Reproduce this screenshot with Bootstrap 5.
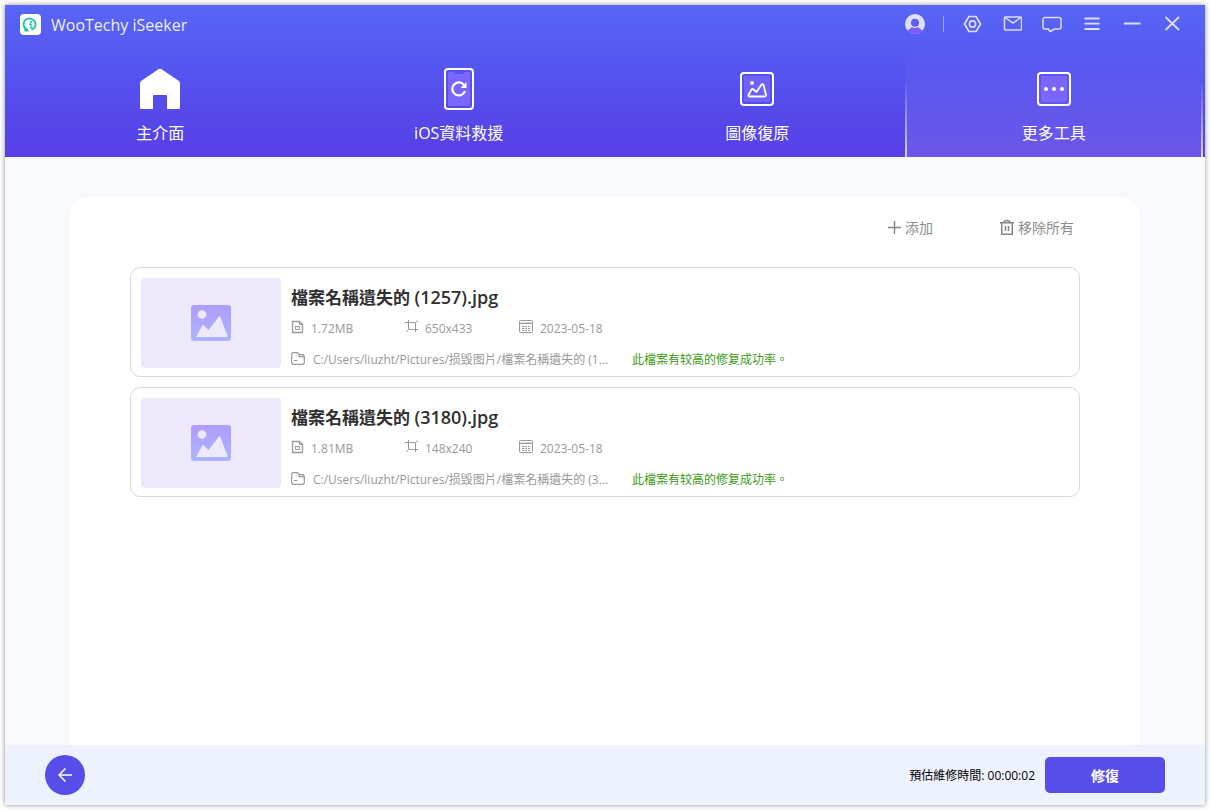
<!DOCTYPE html>
<html lang="zh-Hant">
<head>
<meta charset="utf-8">
<meta name="viewport" content="width=device-width, initial-scale=1">
<title>WooTechy iSeeker</title>
<link href="https://cdn.jsdelivr.net/npm/bootstrap@5.3.0/dist/css/bootstrap.min.css" rel="stylesheet">
<style>
body{font-family:"Open Sans","Noto Sans CJK TC",sans-serif;font-size:12px;line-height:20px;background:#fff;color:#333}
.shell{padding:5px}
.app-window{min-height:calc(100vh - 10px);background:#f7f9fd;box-shadow:0 0 5px rgba(0,0,0,.45)}
.app-head{background:linear-gradient(#5866f6,#5553ef 45%,#573fe6);color:#fff}
.title-bar{height:38px;padding:0 23px 0 15px}
.brand-name{font-size:16px;line-height:24px;margin-left:10px;padding-top:2px;color:#eceeff}
.tool-btn{width:20px;height:20px;padding:0;border:0;background:none;color:#dcdeff;display:flex}
.tool-split{width:1px;height:16px;background:#a3a8fa;margin:0 18px}
.tool-group{gap:20px}
.tab-row{padding:0 2px 0 6px}
.tab-item{height:114px;padding-top:24px;color:#fff;text-decoration:none;font-size:16px;line-height:24px;border:solid transparent;border-width:0 2px}
.tab-item svg{display:block;margin-bottom:11px}
.tab-item:hover{color:#fff}
.tab-item.active{margin-left:-2px;background:linear-gradient(rgba(255,255,255,0),rgba(255,255,255,.12));border-image:linear-gradient(rgba(255,255,255,0) 34%,rgba(255,255,255,.75)) 1}
.body-area{padding:40px 65px 0}
.panel{background:#fff;border-radius:20px 20px 0 0;padding:20px 60px}
.panel-tools{gap:66px;padding:0 6px;margin-bottom:28px}
.text-btn{border:0;background:none;padding:0;color:#8d8d8d;font-size:14px;line-height:22px;display:flex;align-items:center;gap:3px}
.file-list{gap:10px}
.file-card{border:1px solid #dadada;border-radius:10px;height:110px;padding:10px 10px 8px;gap:10px;background:#fff}
.thumb{width:140px;border-radius:4px;background:#ede9fb}
.file-name{font-size:17px;line-height:24px;font-weight:600;margin:8px 0 9px;color:#303030}
.file-ext{font-size:18px;line-height:20px}
.file-meta{color:#999;line-height:20px}
.file-meta svg{flex:none;margin-bottom:5px}
.meta-cell{gap:7px;width:114px}
.path-cell{gap:8px;width:341px}
.path-cell svg{margin:0 0 2px}
.file-meta+.file-meta{margin-top:10px}
.ok-text{color:#3b9c13;padding-top:1px}
.foot-bar{height:60px;background:#eef2fe;padding:0 40px}
.back-btn{width:40px;height:40px;border:0;border-radius:50%;background:#574eea;padding:0}
.eta{color:#000;margin-right:10px;padding-top:2px}
.go-btn{width:120px;height:36px;border:0;border-radius:5px;background:#574eea;color:#fff;font-size:14px;font-weight:700;padding:2px 0 0}
</style>
</head>
<body>
<svg class="position-absolute" width="0" height="0" aria-hidden="true">
<defs>
<linearGradient id="pic" x1="0" y1="0" x2="0" y2="1"><stop stop-color="#b09cfe"/><stop offset="1" stop-color="#aab4ff"/></linearGradient>
</defs>
<symbol id="i-doc" viewBox="0 0 13 14"><g fill="none" stroke="#999"><path d="M1.500 1.500h7l3 3v8h-10z" stroke-width="1.300" stroke-linejoin="round"/><path d="M8.500 1.500v3h3"/><path d="M4.500 6.500h4v3h-4z"/></g></symbol>
<symbol id="i-crop" viewBox="0 0 13 13"><path d="M3.500 0v9.500H13M0 2.500h10.500V12M10.500 2.500L13 .500M3.500 9.500L1 12" fill="none" stroke="#999"/></symbol>
<symbol id="i-cal" viewBox="0 0 14 13"><g fill="none" stroke="#999"><rect x=".5" y=".5" width="13" height="12" rx="1"/><path d="M1 2.500h12" stroke="#ddd"/><path d="M1 3.500h12"/><path d="M3 6.500h8M3 8.500h8M3 10.500h8" stroke-dasharray="2 1"/></g></symbol>
<symbol id="i-folder" viewBox="0 0 14 13"><path d="M2.500.7h4l1.500 2h3.500a1.800 1.800 0 0 1 1.800 1.800v6a1.800 1.800 0 0 1-1.800 1.800h-9a1.800 1.800 0 0 1-1.800-1.800v-8A1.800 1.800 0 0 1 2.500.7zM8 2.700v2h5M3 8.500h3.500" fill="none" stroke="#999" stroke-width="1.200"/></symbol>
<symbol id="i-pic" viewBox="0 0 40 36"><rect width="40" height="36" rx="3" fill="url(#pic)"/><circle cx="11" cy="9.500" r="4.300" fill="#ede9fb"/><path d="M5 32L11.500 20q.5-.7 1 0L17.500 25 28 11.500q.7-.8 1.200 0L36.500 31q.2 1-.8 1z" fill="#ede9fb"/></symbol>
</svg>
<div class="shell">
<div class="app-window d-flex flex-column">
  <header class="app-head">
    <div class="title-bar d-flex align-items-center">
      <svg width="21" height="21" viewBox="0 0 21 21"><rect width="21" height="21" rx="4" fill="#fff"/><path d="M6 15a6 5.800 0 1 1 5.500.8" fill="none" stroke="#22c9a4" stroke-width="1.900"/><path d="M4.500 12v5.500H9L7.500 15z" fill="#16bba8"/><circle cx="11" cy="7.800" r="1.100" fill="#22c9a4"/><path d="M9 10.300h2V14h1.500" fill="none" stroke="#22c9a4" stroke-width="1.400"/></svg>
      <span class="brand-name">WooTechy iSeeker</span>
      <div class="ms-auto d-flex align-items-center">
        <button class="tool-btn" aria-label="Account"><svg width="20" height="20" viewBox="0 0 20 20"><circle cx="10" cy="10" r="10" fill="#dfe0ff"/><path d="M2.500 16.500Q6 14 7 13h6q1 1 4.500 3.500A10 10 0 0 1 2.500 16.500z" fill="#7a5ffb"/><circle cx="10" cy="8.800" r="4.600" fill="#5960f4" stroke="#dfe0ff" stroke-width="1.200"/></svg></button>
        <span class="tool-split"></span>
        <div class="tool-group d-flex">
          <button class="tool-btn" aria-label="Settings"><svg width="20" height="20" viewBox="0 0 20 20" fill="none" stroke="currentColor" stroke-width="1.700"><path d="M7 2.500h7L18.500 10 14 17.500H7L2.500 10z" stroke-linejoin="round"/><circle cx="10.500" cy="10" r="3.100"/></svg></button>
          <button class="tool-btn" aria-label="Mail"><svg width="20" height="20" viewBox="0 0 20 20" fill="none" stroke="currentColor" stroke-width="1.500"><rect x="2.500" y="3" width="17" height="13" rx="1"/><path d="M3 3.500l8 5.500 8-5.500"/></svg></button>
          <button class="tool-btn" aria-label="Feedback"><svg width="20" height="20" viewBox="0 0 20 20" fill="none" stroke="currentColor" stroke-width="1.500"><path d="M3 3.500h14a2 2 0 0 1 2 2V13a2 2 0 0 1-2 2h-4.500L8 17.500 6.500 15H3a2 2 0 0 1-2-2V5.500a2 2 0 0 1 2-2z" stroke-linejoin="round"/></svg></button>
          <button class="tool-btn" aria-label="Menu"><svg width="20" height="20" viewBox="0 0 20 20" stroke="currentColor" stroke-width="1.800"><path d="M2.500 4.500h15M2.500 9.700h15M2.500 15h15"/></svg></button>
          <button class="tool-btn" aria-label="Minimize"><svg width="20" height="20" viewBox="0 0 20 20" stroke="currentColor" stroke-width="2"><path d="M2 9.500h16.500"/></svg></button>
          <button class="tool-btn" aria-label="Close"><svg width="20" height="20" viewBox="0 0 20 20" stroke="currentColor" stroke-width="1.800"><path d="M3.500 3l13.500 13M17 3L3.500 16"/></svg></button>
        </div>
      </div>
    </div>
    <nav class="tab-row d-flex">
      <a href="#" class="tab-item flex-fill w-25 d-flex flex-column align-items-center"><svg width="42" height="43" viewBox="0 0 42 43"><path d="M19 2.500q2-1.500 4 0L40 14q1 1 1 2.500V41q0 1-1 1H28V29q0-1-1-1H15q-1 0-1 1v13H2q-1 0-1-1V16.500Q1 15 2 14z" fill="#fff"/></svg>主介面</a>
      <a href="#" class="tab-item flex-fill w-25 d-flex flex-column align-items-center"><svg width="42" height="43" viewBox="0 0 42 43"><rect x="7" y="2" width="28" height="40" rx="3" fill="none" stroke="#fff" stroke-width="2"/><path d="M11 5h5l1 2h8l1-2h5a1 1 0 0 1 1 1v32a1 1 0 0 1-1 1H11a1 1 0 0 1-1-1V6a1 1 0 0 1 1-1z" fill="#7b66ff"/><path d="M27 24a6.500 6.500 0 1 1-1-6" fill="none" stroke="#fff" stroke-width="2.200"/><path d="M28.500 15v6h-6z" fill="#fff"/></svg>iOS資料救援</a>
      <a href="#" class="tab-item flex-fill w-25 d-flex flex-column align-items-center"><svg width="42" height="43" viewBox="0 0 42 43"><rect x="5" y="6" width="32" height="32" rx="3" fill="none" stroke="#fff" stroke-width="2"/><rect x="8" y="9" width="26" height="26" rx="1" fill="#6f61fb"/><circle cx="16" cy="16" r="2" fill="#fff"/><path d="M13.500 29.500q-1.500 0-1-1.500l3-5.500q1-1 2 0l3 2.500 5-7.500q1-1 2 .5l2.500 10q0 1.500-1.500 1.500z" fill="none" stroke="#fff" stroke-width="1.800" stroke-linejoin="round"/></svg>圖像復原</a>
      <a href="#" class="tab-item active flex-fill w-25 d-flex flex-column align-items-center" aria-current="page"><svg width="42" height="43" viewBox="0 0 42 43"><rect x="5" y="6" width="32" height="32" rx="3" fill="none" stroke="#fff" stroke-width="2"/><rect x="8" y="9" width="26" height="26" rx="1" fill="#7b66ff"/><g fill="#fff"><circle cx="13" cy="22" r="2"/><circle cx="21" cy="22" r="2"/><circle cx="29" cy="22" r="2"/></g></svg>更多工具</a>
    </nav>
  </header>
  <main class="body-area flex-grow-1 d-flex flex-column">
    <section class="panel flex-grow-1">
      <div class="panel-tools d-flex justify-content-end">
        <button class="text-btn"><svg width="14" height="18" viewBox="0 0 14 18"><path d="M0 8.500h13M6.500 2v13" stroke="#858585" stroke-width="1.500"/></svg>添加</button>
        <button class="text-btn"><svg width="16" height="18" viewBox="0 0 16 18" fill="none" stroke="#858585" stroke-width="1.500"><path d="M1 3.700h14M5 3.500q0-2 3-2t3 2M2.700 4v11.200h10.600V4M6.500 7v5M9.500 7v5"/></svg>移除所有</button>
      </div>
      <div class="file-list d-flex flex-column">
        <article class="file-card d-flex">
          <div class="thumb d-flex align-items-center justify-content-center"><svg width="40" height="36"><use href="#i-pic"/></svg></div>
          <div>
            <h2 class="file-name">檔案名稱遺失的 <span class="file-ext">(1257).jpg</span></h2>
            <div class="file-meta d-flex">
              <span class="meta-cell d-flex align-items-center"><svg width="13" height="14"><use href="#i-doc"/></svg>1.72MB</span>
              <span class="meta-cell d-flex align-items-center"><svg width="13" height="13"><use href="#i-crop"/></svg>650x433</span>
              <span class="meta-cell d-flex align-items-center"><svg width="14" height="13"><use href="#i-cal"/></svg>2023-05-18</span>
            </div>
            <div class="file-meta d-flex">
              <span class="path-cell d-flex align-items-center"><svg width="14" height="13"><use href="#i-folder"/></svg>C:/Users/liuzht/Pictures/损毁图片/檔案名稱遺失的 (1...</span>
              <span class="ok-text">此檔案有较高的修复成功率。</span>
            </div>
          </div>
        </article>
        <article class="file-card d-flex">
          <div class="thumb d-flex align-items-center justify-content-center"><svg width="40" height="36"><use href="#i-pic"/></svg></div>
          <div>
            <h2 class="file-name">檔案名稱遺失的 <span class="file-ext">(3180).jpg</span></h2>
            <div class="file-meta d-flex">
              <span class="meta-cell d-flex align-items-center"><svg width="13" height="14"><use href="#i-doc"/></svg>1.81MB</span>
              <span class="meta-cell d-flex align-items-center"><svg width="13" height="13"><use href="#i-crop"/></svg>148x240</span>
              <span class="meta-cell d-flex align-items-center"><svg width="14" height="13"><use href="#i-cal"/></svg>2023-05-18</span>
            </div>
            <div class="file-meta d-flex">
              <span class="path-cell d-flex align-items-center"><svg width="14" height="13"><use href="#i-folder"/></svg>C:/Users/liuzht/Pictures/损毁图片/檔案名稱遺失的 (3...</span>
              <span class="ok-text">此檔案有较高的修复成功率。</span>
            </div>
          </div>
        </article>
      </div>
    </section>
  </main>
  <footer class="foot-bar d-flex align-items-center">
    <button class="back-btn d-flex align-items-center justify-content-center" aria-label="Back"><svg width="16" height="16" viewBox="0 0 16 16" fill="none" stroke="#fff" stroke-width="1.500"><path d="M8.500 1.500L2 8l6.500 6.500M2 8h13"/></svg></button>
    <span class="eta ms-auto">預估維修時間: 00:00:02</span>
    <button class="go-btn">修復</button>
  </footer>
</div>
</div>
<script src="https://cdn.jsdelivr.net/npm/bootstrap@5.3.0/dist/js/bootstrap.bundle.min.js"></script>
</body>
</html>
